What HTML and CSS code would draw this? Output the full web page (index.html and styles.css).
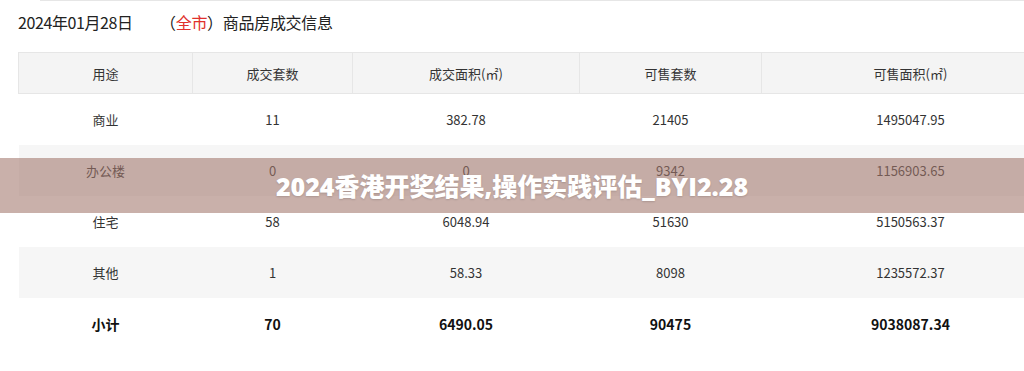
FILE: index.html
```html
<!DOCTYPE html>
<html lang="zh">
<head>
<meta charset="utf-8">
<link rel="stylesheet" href="styles.css">
</head>
<body>
<div class="page">
  <div class="topline"></div>
  <div class="title">
    <span class="date">2024年01月28日</span>
    <span class="scope">（<span class="red">全市</span>）商品房成交信息</span>
  </div>
  <table class="data">
    <colgroup>
      <col class="c1"><col class="c2"><col class="c3"><col class="c4"><col class="c5">
    </colgroup>
    <thead>
      <tr><th>用途</th><th>成交套数</th><th>成交面积(㎡)</th><th>可售套数</th><th>可售面积(㎡)</th></tr>
    </thead>
    <tbody>
      <tr><td>商业</td><td>11</td><td>382.78</td><td>21405</td><td>1495047.95</td></tr>
      <tr class="alt"><td>办公楼</td><td>0</td><td>0</td><td>9342</td><td>1156903.65</td></tr>
      <tr><td>住宅</td><td>58</td><td>6048.94</td><td>51630</td><td>5150563.37</td></tr>
      <tr class="alt"><td>其他</td><td>1</td><td>58.33</td><td>8098</td><td>1235572.37</td></tr>
      <tr class="total"><td>小计</td><td>70</td><td>6490.05</td><td>90475</td><td>9038087.34</td></tr>
    </tbody>
  </table>
  <div class="banner">2024香港开奖结果,操作实践评估_BYI2.28</div>
</div>
</body>
</html>
```
FILE: styles.css
```css
html, body {
  margin: 0;
  padding: 0;
  background: #fff;
  overflow: hidden;
}
body {
  width: 1024px;
  height: 371px;
  font-family: "Noto Sans CJK SC", "Noto Sans", sans-serif;
  color: #333;
}
.page {
  position: relative;
  height: 371px;
}
.topline {
  margin-left: 40px;
  height: 1px;
  background: #e6e6e6;
}
.title {
  display: flex;
  align-items: center;
  height: 42px;
  padding-left: 18px;
  font-size: 16px;
  color: #222;
}
.date {
  width: 142px;
  letter-spacing: -0.4px;
}
.scope {
  letter-spacing: -0.3px;
}
.red {
  color: #e0302c;
}
.data {
  margin-top: 9px;
  margin-left: 18px;
  width: 1041px;
  border-collapse: collapse;
  table-layout: fixed;
  font-size: 13px;
}
.c1 { width: 174px; }
.c2 { width: 160px; }
.c3 { width: 227px; }
.c4 { width: 182px; }
.c5 { width: 298px; }
.data th {
  height: 40px;
  padding: 0;
  background: #f4f4f4;
  border: 1px solid #e6e6e6;
  font-weight: normal;
  color: #333;
  text-align: center;
}
.data td {
  height: 51px;
  padding: 0;
  text-align: center;
  color: #333;
}
.data tr.alt td {
  background: #f6f6f6;
}
.data tr.total td {
  font-weight: bold;
  color: #111;
  font-size: 14px;
}
.banner {
  position: absolute;
  left: 0;
  top: 158px;
  width: 1024px;
  height: 55px;
  background: rgba(162, 119, 109, 0.58);
  color: #fff;
  font-family: "Open Sans", "Noto Sans CJK SC", sans-serif;
  font-weight: 800;
  font-size: 25px;
  display: flex;
  align-items: center;
  justify-content: center;
  padding-bottom: 2px;
  box-sizing: border-box;
  text-shadow: 0 1px 2px rgba(0,0,0,0.15);
}
```
